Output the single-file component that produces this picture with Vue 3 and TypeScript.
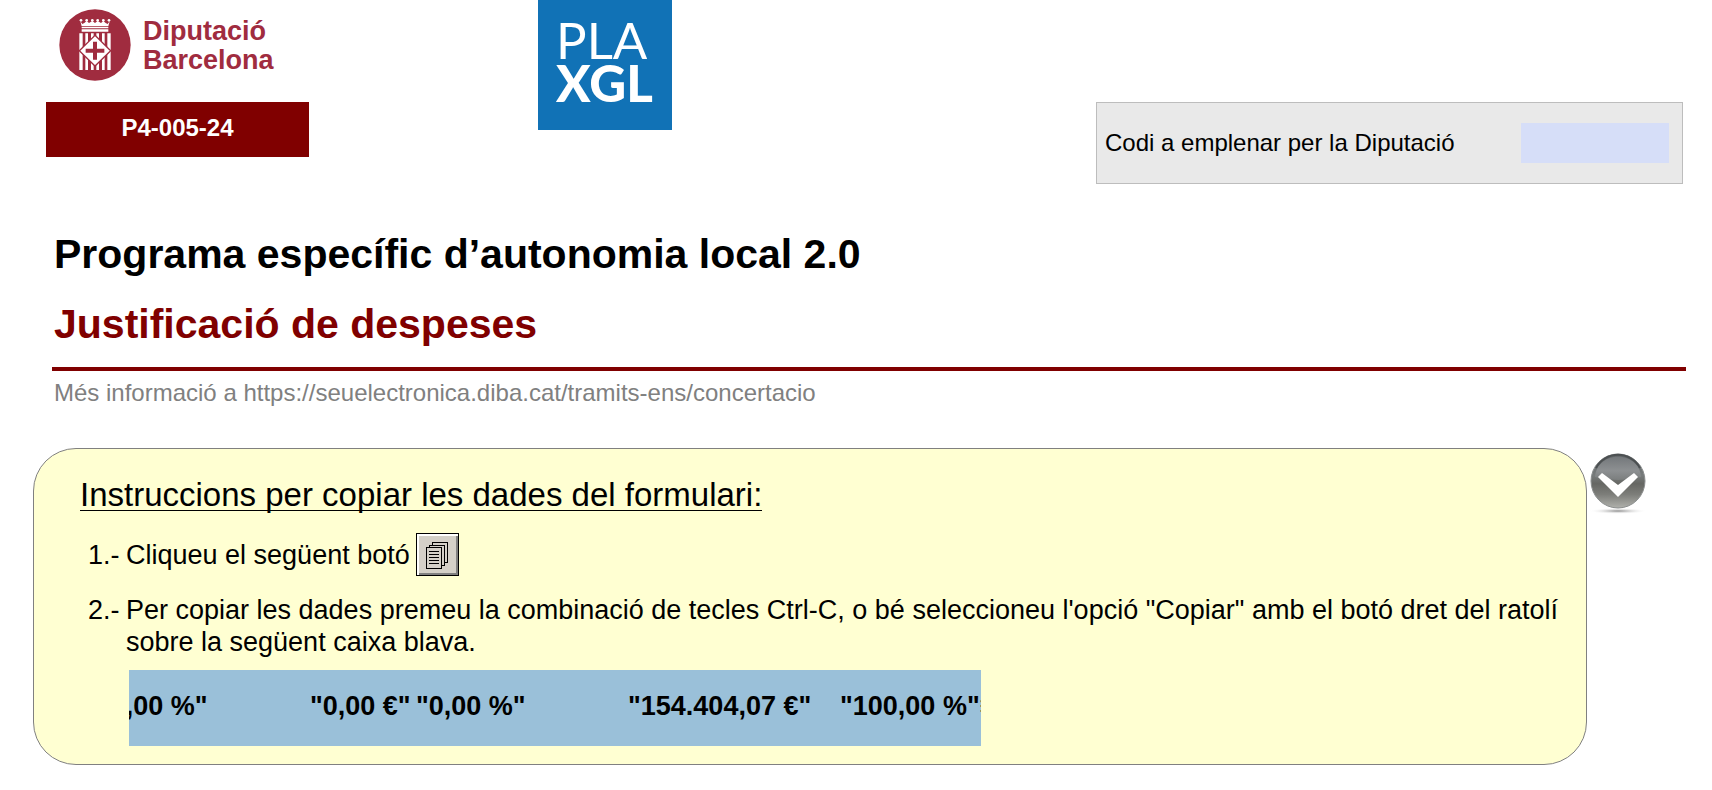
<script setup lang="ts">
import { ref } from 'vue'

const code = ref('')
const open = ref(true)
const infoUrl = 'https://seuelectronica.diba.cat/tramits-ens/concertacio'
const copyData = '"0,00 %"\t"0,00 €"\t"0,00 %"\t"154.404,07 €"\t"100,00 %"≡'
const dataBox = ref<HTMLTextAreaElement | null>(null)

function selectData(): void {
  dataBox.value?.select()
}
</script>

<template>
  <main class="page">
    <header class="top">
      <div class="brand">
        <div class="logo">
          <svg class="crest" viewBox="0 0 216 216" aria-hidden="true">
            <circle cx="108" cy="108" r="107" fill="#a02c3f" />
            <g fill="#fff">
              <circle v-for="x in [66, 83, 100, 116, 133, 150]" :key="x" :cx="x" cy="34" r="4" />
              <path d="M64 37l6 8 6-3 7-6 7 6 10-6 8 6 8-6 10 6 7-6 7 6 6 3 6-8-4 15H68z" />
              <path d="M68 54h80v4H68zM68 61h80v7H68z" />
              <path d="M61 73h10v110H61zM79 73h8v110H79zM96 73h8v110H96zM112 73h8v110H112zM129 73h8v110H129zM145 73h10v110H145z" />
            </g>
            <path d="M108 79l47 46-47 46-47-46z" fill="#fff" stroke="#a02c3f" stroke-width="4" />
            <path d="M102 98h12v21h22v12h-22v21h-12v-21H80v-12h22z" fill="#a02c3f" />
          </svg>
          <div class="name">Diputació<br />Barcelona</div>
        </div>
        <div class="form-code">P4-005-24</div>
      </div>
      <div class="plan">
        <span class="plan-light">PLA</span>
        <span class="plan-heavy">XGL</span>
      </div>
      <div class="code-box">
        <label for="code">Codi a emplenar per la Diputació</label>
        <input id="code" v-model="code" type="text" />
      </div>
    </header>

    <section class="titles">
      <h1>Programa específic d’autonomia local 2.0</h1>
      <h2>Justificació de despeses</h2>
    </section>
    <p class="info">Més informació a <a :href="infoUrl">{{ infoUrl }}</a></p>

    <div class="help">
      <section class="panel">
        <h3>Instruccions per copiar les dades del formulari:</h3>
        <div class="step">
          <span class="num">1.-</span>
          <span>Cliqueu el següent botó</span>
          <button class="copy" type="button" aria-label="Copiar" @click="selectData">
            <svg viewBox="0 0 23 28" aria-hidden="true" fill="#d4d0c8" stroke="#000" shape-rendering="crispEdges">
              <path d="M6.500 1.500h15v20h-15z" />
              <path d="M3.500 4.500h15v20h-15z" />
              <path d="M.500 6.500h15v21h-15z" />
              <path d="M3 10.500h10M3 13.500h10M3 16.500h10M3 19.500h10M3 22.500h10" />
            </svg>
          </button>
        </div>
        <div class="step second">
          <span class="num">2.-</span>
          <span>Per copiar les dades premeu la combinació de tecles Ctrl-C, o bé seleccioneu l'opció "Copiar" amb el botó dret del ratolí sobre la següent caixa blava.</span>
        </div>
        <div class="data">
          <textarea ref="dataBox" rows="1" wrap="off" readonly aria-label="Dades del formulari" :value="copyData"></textarea>
        </div>
      </section>
      <button class="toggle" type="button" aria-label="Instruccions" :aria-expanded="open" @click="open = !open">
        <svg viewBox="0 0 58 62" aria-hidden="true">
          <defs>
            <linearGradient id="ball" x1="0" y1="0" x2="0" y2="1">
              <stop offset="0" stop-color="#5f6365" />
              <stop offset=".4" stop-color="#777b7b" />
              <stop offset=".55" stop-color="#666763" />
              <stop offset=".75" stop-color="#7d7e7a" />
              <stop offset="1" stop-color="#b0b1ac" />
            </linearGradient>
            <linearGradient id="shine" x1="0" y1="0" x2="0" y2="1">
              <stop offset="0" stop-color="#74787b" />
              <stop offset=".6" stop-color="#8d9092" />
              <stop offset="1" stop-color="#7b7e7e" />
            </linearGradient>
            <radialGradient id="shade">
              <stop offset="0" stop-color="#8b8b8b" />
              <stop offset="1" stop-color="#fff" stop-opacity="0" />
            </radialGradient>
          </defs>
          <ellipse cx="29" cy="58" rx="29" ry="3" fill="url(#shade)" />
          <circle cx="29" cy="28" r="27" fill="url(#ball)" stroke="#8a8d8d" stroke-width="1" />
          <path d="M6 24C8 -3 50 -3 52 24Q29 30 6 24z" fill="url(#shine)" />
          <path d="M7 15a25 25 0 0 1 44 0" fill="none" stroke="#4c5052" stroke-width="2" />
          <path d="M9 24l4-4 16 12 16-12 4 4-20 20z" fill="#fff" />
        </svg>
      </button>
    </div>
  </main>
</template>

<style>
body {
  margin: 0;
  background: #fff;
}
</style>

<style scoped>
.page {
  font-family: "Liberation Sans", Arial, sans-serif;
  color: #000;
}
.top {
  display: flex;
  align-items: flex-start;
  padding: 0 29px 0 46px;
}
.brand {
  width: 263px;
}
.logo {
  display: flex;
  gap: 12px;
  padding: 9px 0 0 13px;
  height: 102px;
  box-sizing: border-box;
}
.crest {
  width: 72px;
  height: 72px;
}
.name {
  padding-top: 8px;
  font-size: 27px;
  font-weight: bold;
  line-height: 29px;
  color: #a02c3f;
}
.form-code {
  height: 55px;
  background: #800000;
  color: #fff;
  font-weight: bold;
  font-size: 24px;
  line-height: 52px;
  text-align: center;
}
.plan {
  display: flex;
  flex-direction: column;
  box-sizing: border-box;
  width: 134px;
  height: 130px;
  margin-left: 229px;
  padding: 18px 0 0 18px;
  background: #1172b6;
  color: #fff;
  font-family: Lato, sans-serif;
  font-size: 51px;
  line-height: 43px;
}
.plan-heavy {
  font-weight: 900;
}
.code-box {
  display: flex;
  align-items: center;
  justify-content: space-between;
  box-sizing: border-box;
  width: 587px;
  height: 82px;
  margin: 102px 0 0 auto;
  padding: 0 13px 0 8px;
  border: 1px solid #bdbdbd;
  background: #e9e9e9;
  font-size: 24px;
}
.code-box input {
  width: 148px;
  height: 40px;
  box-sizing: border-box;
  border: 0;
  background: #d6def8;
  font: inherit;
}
.titles {
  margin: 35px 26px 0 52px;
  padding: 0 2px 8px;
  border-bottom: 4px solid #800000;
}
h1,
h2 {
  margin: 0;
  font-size: 41px;
  line-height: 70px;
}
h2 {
  color: #800000;
}
.info {
  margin: 8px 0 0 54px;
  font-size: 24px;
  line-height: 28px;
  color: #808080;
}
.info a {
  color: inherit;
  text-decoration: none;
}
.help {
  display: flex;
  align-items: flex-start;
  gap: 2px;
  margin: 41px 65px 26px 33px;
}
.panel {
  flex: 1;
  box-sizing: border-box;
  padding: 31px 26px 18px 46px;
  border: 1px solid #808080;
  border-radius: 43px;
  background: #ffffd2;
  font-size: 27px;
  line-height: 32px;
}
h3 {
  display: inline-block;
  margin: 0;
  border-bottom: 1px solid #000;
  font-size: 33px;
  font-weight: normal;
  line-height: 30px;
}
.step {
  display: flex;
  align-items: center;
  margin: 20px 0 0 8px;
}
.step.second {
  align-items: flex-start;
  margin-top: 18px;
}
.num {
  flex: none;
  width: 38px;
}
.copy {
  display: flex;
  align-items: center;
  justify-content: center;
  width: 43px;
  height: 43px;
  margin-left: 6px;
  padding: 0;
  border: 1px solid #000;
  background: #d4d0c8;
  box-shadow: inset 2px 2px #fff, inset -2px -2px #808080;
}
.copy svg {
  width: 23px;
  height: 28px;
}
.data {
  width: 852px;
  height: 76px;
  margin: 12px 0 0 49px;
  overflow: hidden;
  background: #9ac0d9;
}
.data textarea {
  display: block;
  box-sizing: border-box;
  width: 920px;
  height: 76px;
  margin-left: -31px;
  padding: 20px 0;
  border: 0;
  overflow: hidden;
  resize: none;
  background: transparent;
  color: #000;
  font: bold 27px/32px "Liberation Sans", Arial, sans-serif;
  white-space: pre;
  tab-size: 106px;
}
.toggle {
  flex: none;
  width: 58px;
  height: 62px;
  margin-top: 5px;
  padding: 0;
  border: 0;
  background: none;
}
.toggle svg {
  display: block;
  width: 58px;
  height: 62px;
}
</style>
